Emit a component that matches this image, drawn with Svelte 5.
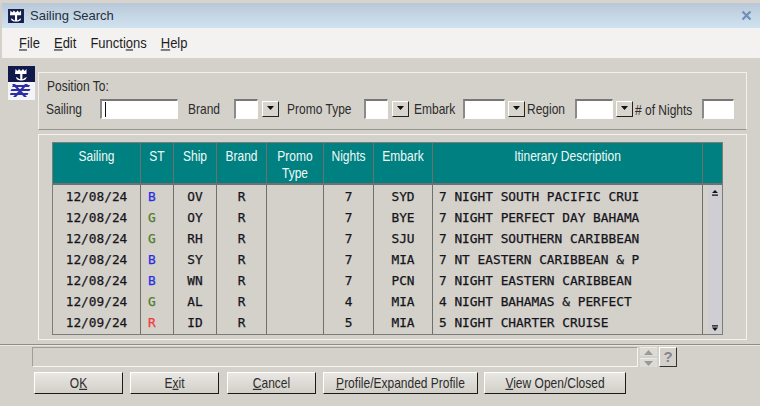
<script>
  const rows = [
    ['12/08/24','B','OV','R','','7','SYD','7 NIGHT SOUTH PACIFIC CRUI'],
    ['12/08/24','G','OY','R','','7','BYE','7 NIGHT PERFECT DAY BAHAMA'],
    ['12/08/24','G','RH','R','','7','SJU','7 NIGHT SOUTHERN CARIBBEAN'],
    ['12/08/24','B','SY','R','','7','MIA','7 NT EASTERN CARIBBEAN & P'],
    ['12/08/24','B','WN','R','','7','PCN','7 NIGHT EASTERN CARIBBEAN'],
    ['12/09/24','G','AL','R','','4','MIA','4 NIGHT BAHAMAS & PERFECT'],
    ['12/09/24','R','ID','R','','5','MIA','5 NIGHT CHARTER CRUISE']
  ];
  const cols = [
    { head: ['Sailing'], cls: 'c-sailing' },
    { head: ['ST'], cls: 'c-st' },
    { head: ['Ship'], cls: 'c-ship' },
    { head: ['Brand'], cls: 'c-brand' },
    { head: ['Promo', 'Type'], cls: 'c-promo' },
    { head: ['Nights'], cls: 'c-nights' },
    { head: ['Embark'], cls: 'c-embark' },
    { head: ['Itinerary Description'], cls: 'c-desc' }
  ];
</script>

{#snippet arrow()}
  <button class="drop" tabindex="-1" aria-label="Open list">
    <svg width="9" height="5" viewBox="0 0 9 5"><path d="M1 0h7L4.500 4z" fill="#111"/></svg>
  </button>
{/snippet}

{#snippet crown()}
  <path d="M2.500 1.500l2 2 1.500-2 2 2 2-2 1.500 2 2-2v5h-11.500z" fill="#fff"/>
  <path d="M7.200 6h2.200v6.500H7.200z" fill="#fff"/>
  <path d="M3 9.500c0 2.500 2.500 3.500 5.300 3.500s5.300-1 5.300-3.500l-2 1c-.6 1-2 1.300-3.300 1.300s-2.700-.3-3.300-1.300z" fill="#fff"/>
{/snippet}

<div class="window">
  <div class="strip"></div>
  <header class="title">
    <svg class="title-icon" width="16" height="14" viewBox="0 0 16.500 14.500">
      <rect width="16.500" height="14.500" fill="#16204f"/>
      {@render crown()}
    </svg>
    <span class="title-text">Sailing Search</span>
    <svg class="close" width="11" height="11" viewBox="0 0 11 11"><path d="M1.500 1.500l8 8M9.500 1.500l-8 8" stroke="#6f8fb8" stroke-width="2.200"/></svg>
  </header>
  <nav class="menu">
    <span class="t"><u>F</u>ile</span>
    <span class="t"><u>E</u>dit</span>
    <span class="t">Functi<u>o</u>ns</span>
    <span class="t"><u>H</u>elp</span>
  </nav>

  <div class="content">
    <div class="logo">
      <svg width="27" height="34" viewBox="0 0 27 34">
        <rect width="27" height="34" fill="#f4f4f8"/>
        <rect width="27" height="16" fill="#11194a"/>
        <g transform="translate(5 1.500)">{@render crown()}</g>
        <g fill="#2b2ea6">
          <path d="M5 19h17l-1 2H4zM3.500 23h19l-1 2H2.500zM2.500 27h18l-1 2H2z"/>
          <path d="M7 18l12 13h-3L4 18zM20 18L8 31H5l12-13z"/>
        </g>
      </svg>
    </div>

    <div class="panels">
      <section class="search">
        <div class="pos"><span class="t">Position To:</span></div>
        <div class="fields">
          <span class="t">Sailing</span>
          <div class="input"><i class="caret"></i></div>
          <span class="t lbl-a">Brand</span>
          <div class="input"></div>
          {@render arrow()}
          <span class="t lbl-a">Promo Type</span>
          <div class="input"></div>
          {@render arrow()}
          <span class="t lbl-b">Embark</span>
          <div class="input"></div>
          {@render arrow()}
          <span class="t lbl-c">Region</span>
          <div class="input"></div>
          {@render arrow()}
          <span class="t lbl-c nights">#&nbsp;of Nights</span>
          <div class="input"></div>
        </div>
      </section>

      <section class="frame">
        <div class="table">
          {#each cols as col, i}
            <div class="col {col.cls}">
              <div class="head">
                {#each col.head as line}<span class="t">{line}</span>{/each}
              </div>
              <div class="cells">
                {#each rows as row}
                  <div class="cell" class:stat={i === 1} data-s={i === 1 ? row[1] : undefined}>{row[i]}</div>
                {/each}
              </div>
            </div>
          {/each}
          <div class="col c-scroll">
            <div class="head"></div>
            <div class="scroll">
              <svg width="8" height="8" viewBox="0 0 8 8"><path d="M4 1l3 3H1z M1 5.500h6v1.300H1z" fill="#111"/></svg>
              <svg width="8" height="8" viewBox="0 0 8 8"><path d="M1 1.200h6v1.300H1z M1 3.500h6L4 7z" fill="#111"/></svg>
            </div>
          </div>
        </div>
      </section>
    </div>
  </div>

  <footer class="footer">
    <div class="status-row">
      <div class="status"></div>
      <div class="spin">
        <div class="spin-b"><svg width="9" height="5" viewBox="0 0 9 5"><path d="M4.500 0L9 5H0z" fill="#9a9a96"/></svg></div>
        <div class="spin-b"><svg width="9" height="5" viewBox="0 0 9 5"><path d="M0 0h9L4.500 5z" fill="#9a9a96"/></svg></div>
      </div>
      <div class="help">?</div>
    </div>
    <div class="buttons">
      <button class="btn b-std"><span class="t">O<u>K</u></span></button>
      <button class="btn b-std"><span class="t">E<u>x</u>it</span></button>
      <button class="btn b-std cancel"><span class="t"><u>C</u>ancel</span></button>
      <button class="btn b-profile"><span class="t"><u>P</u>rofile/Expanded Profile</span></button>
      <button class="btn b-view"><span class="t"><u>V</u>iew Open/Closed</span></button>
    </div>
  </footer>
</div>

<style>
  :global(body) { margin: 0; background: #d4d0c8; }
  .window {
    width: 760px; height: 406px; overflow: hidden; display: flex; flex-direction: column;
    background: #d4d1ca; color: #2c2c2c;
    font: 12px "Liberation Sans", Arial, sans-serif;
  }
  .t { display: inline-block; transform: scaleY(1.16); white-space: nowrap; }
  .strip { height: 3px; background: #d8d4cc; flex: none; }
  .title {
    height: 25px; flex: none; display: flex; align-items: center; margin-left: 2px; padding-left: 6px;
    background: linear-gradient(#b9c8d8, #d0e3f1);
  }
  .title-icon { flex: none; }
  .title-text { margin-left: 6px; font-size: 13px; color: #27303c; }
  .close { margin-left: auto; margin-right: 8px; }
  .menu {
    height: 30px; flex: none; display: flex; align-items: center; gap: 14px; margin-left: 2px; padding-left: 17px;
    background: #f4f2f1; color: #1d1d1d; font-size: 13px;
  }
  .menu .t { transform: scaleY(1.08); }
  .content { display: flex; padding: 8px 0 0 8px; flex: none; }
  .logo { width: 27px; height: 34px; margin-right: 3px; flex: none; }
  .logo svg { display: block; }
  .panels { width: 709px; margin-top: 6px; flex: none; }
  .search {
    height: 58px; box-sizing: border-box; padding: 6px 0 0 7px;
    border: 1px solid #f1f0ec; border-bottom-color: #96948e;
  }
  .pos { height: 19px; line-height: 15px; margin-left: 1px; }
  .fields {
    display: grid; height: 21px; align-items: center;
    grid-template-columns: 54px 78px 56px 24px 21px 85px 24px 21px 54px 42px 20px 50px 38px 20px 69px 32px;
  }
  .lbl-a { padding-left: 10px; }
  .lbl-a + .input + .drop + .lbl-a { padding-left: 8px; }
  .lbl-b { padding-left: 5px; }
  .lbl-c { padding-left: 2px; }
  .nights { padding-top: 3px; }
  .input {
    height: 20px; box-sizing: border-box; background: #fff; position: relative;
    border: 1px solid #fdfdfc; border-top: 2px solid #777; border-left: 2px solid #8a8a8a;
  }
  .caret { position: absolute; left: 3px; top: 1px; width: 1px; height: 15px; background: #111; }
  .drop {
    justify-self: end; width: 17px; height: 16px; padding: 0; margin: 0; box-sizing: border-box;
    display: flex; align-items: center; justify-content: center;
    background: #d8d5ce; border: 1px solid #fff; border-right: 1px solid #222; border-bottom: 1px solid #222;
  }
  .frame {
    height: 206px; margin-top: 4px; box-sizing: border-box; padding: 7px 0 0 13px;
    border: 1px solid #f4f3f0; border-left: 1px solid #f8f8f6;
  }
  .table { display: flex; height: 193px; width: 671px; border: 1px solid #7c7c78; border-left-width: 1px; box-sizing: border-box; }
  .col { display: flex; flex-direction: column; flex: none; box-sizing: border-box; border-right: 1px solid #6f6f6c; }
  .head {
    height: 40px; flex: none; background: #008080; color: #f2fbfa; display: flex; flex-direction: column;
    align-items: center; padding-top: 5px; box-sizing: border-box; border-bottom: 2px solid #707070;
    line-height: 17px; height: 42px;
  }
  .cells { flex: 1; padding-top: 1px; }
  .cell {
    height: 21px; line-height: 21px; text-align: center; white-space: pre; color: #14141c;
    font: 12.8px/21px "DejaVu Sans Mono", monospace; -webkit-text-stroke: 0.25px #14141c;
  }
  .c-sailing { width: 88px; } .c-st { width: 33px; } .c-ship { width: 43px; } .c-brand { width: 50px; }
  .c-promo { width: 57px; } .c-nights { width: 50px; } .c-embark { width: 59px; } .c-desc { width: 270px; }
  .c-scroll { width: 20px; border-right: 0; flex: 1; }
  .c-desc .cell { text-align: left; padding-left: 6px; }
  .stat { text-align: left; padding-left: 7px; }
  .stat[data-s="B"] { color: #2d2de0; -webkit-text-stroke-color: #2d2de0; }
  .stat[data-s="G"] { color: #4f7d2c; -webkit-text-stroke-color: #4f7d2c; }
  .stat[data-s="R"] { color: #f23a3a; -webkit-text-stroke-color: #f23a3a; }
  .scroll {
    flex: 1; margin-left: 5px; background: #cfcfd3; display: flex; flex-direction: column;
    justify-content: space-between; align-items: center; padding: 4px 0 2px;
  }
  .footer { margin-top: 4px; border-top: 1px solid #8f8d88; box-shadow: inset 0 1px 0 #e9e7e2; flex: none; padding: 2px 0 0 32px; }
  .status-row { display: flex; height: 20px; }
  .status { width: 606px; box-sizing: border-box; border: 1px solid #f6f5f2; border-top-color: #a09e99; border-left-color: #a09e99; }
  .spin { margin-left: 2px; width: 17px; display: flex; flex-direction: column; justify-content: space-between; }
  .spin-b { height: 9px; background: #dddbd5; display: flex; align-items: center; justify-content: center; border-top: 1px solid #eeece8; box-sizing: border-box; }
  .help {
    margin-left: 2px; width: 18px; box-sizing: border-box; text-align: center; line-height: 18px;
    font-size: 15px; font-weight: bold; color: #85858f;
    border: 1px solid #fff; border-right-color: #333; border-bottom-color: #333;
  }
  .buttons { display: flex; margin-top: 5px; margin-left: 2px; gap: 7px; }
  .btn {
    height: 22px; padding: 0; box-sizing: border-box; font: inherit; color: #2c2c2c;
    background: linear-gradient(#e9e7e3, #d2cfc8);
    border: 1px solid #fff; border-right-color: #1a1a1a; border-bottom-color: #1a1a1a;
  }
  .b-std { width: 89px; }
  .cancel { margin-left: 1px; }
  .b-profile { width: 155px; }
  .b-view { width: 142px; margin-left: -1px; }
</style>
